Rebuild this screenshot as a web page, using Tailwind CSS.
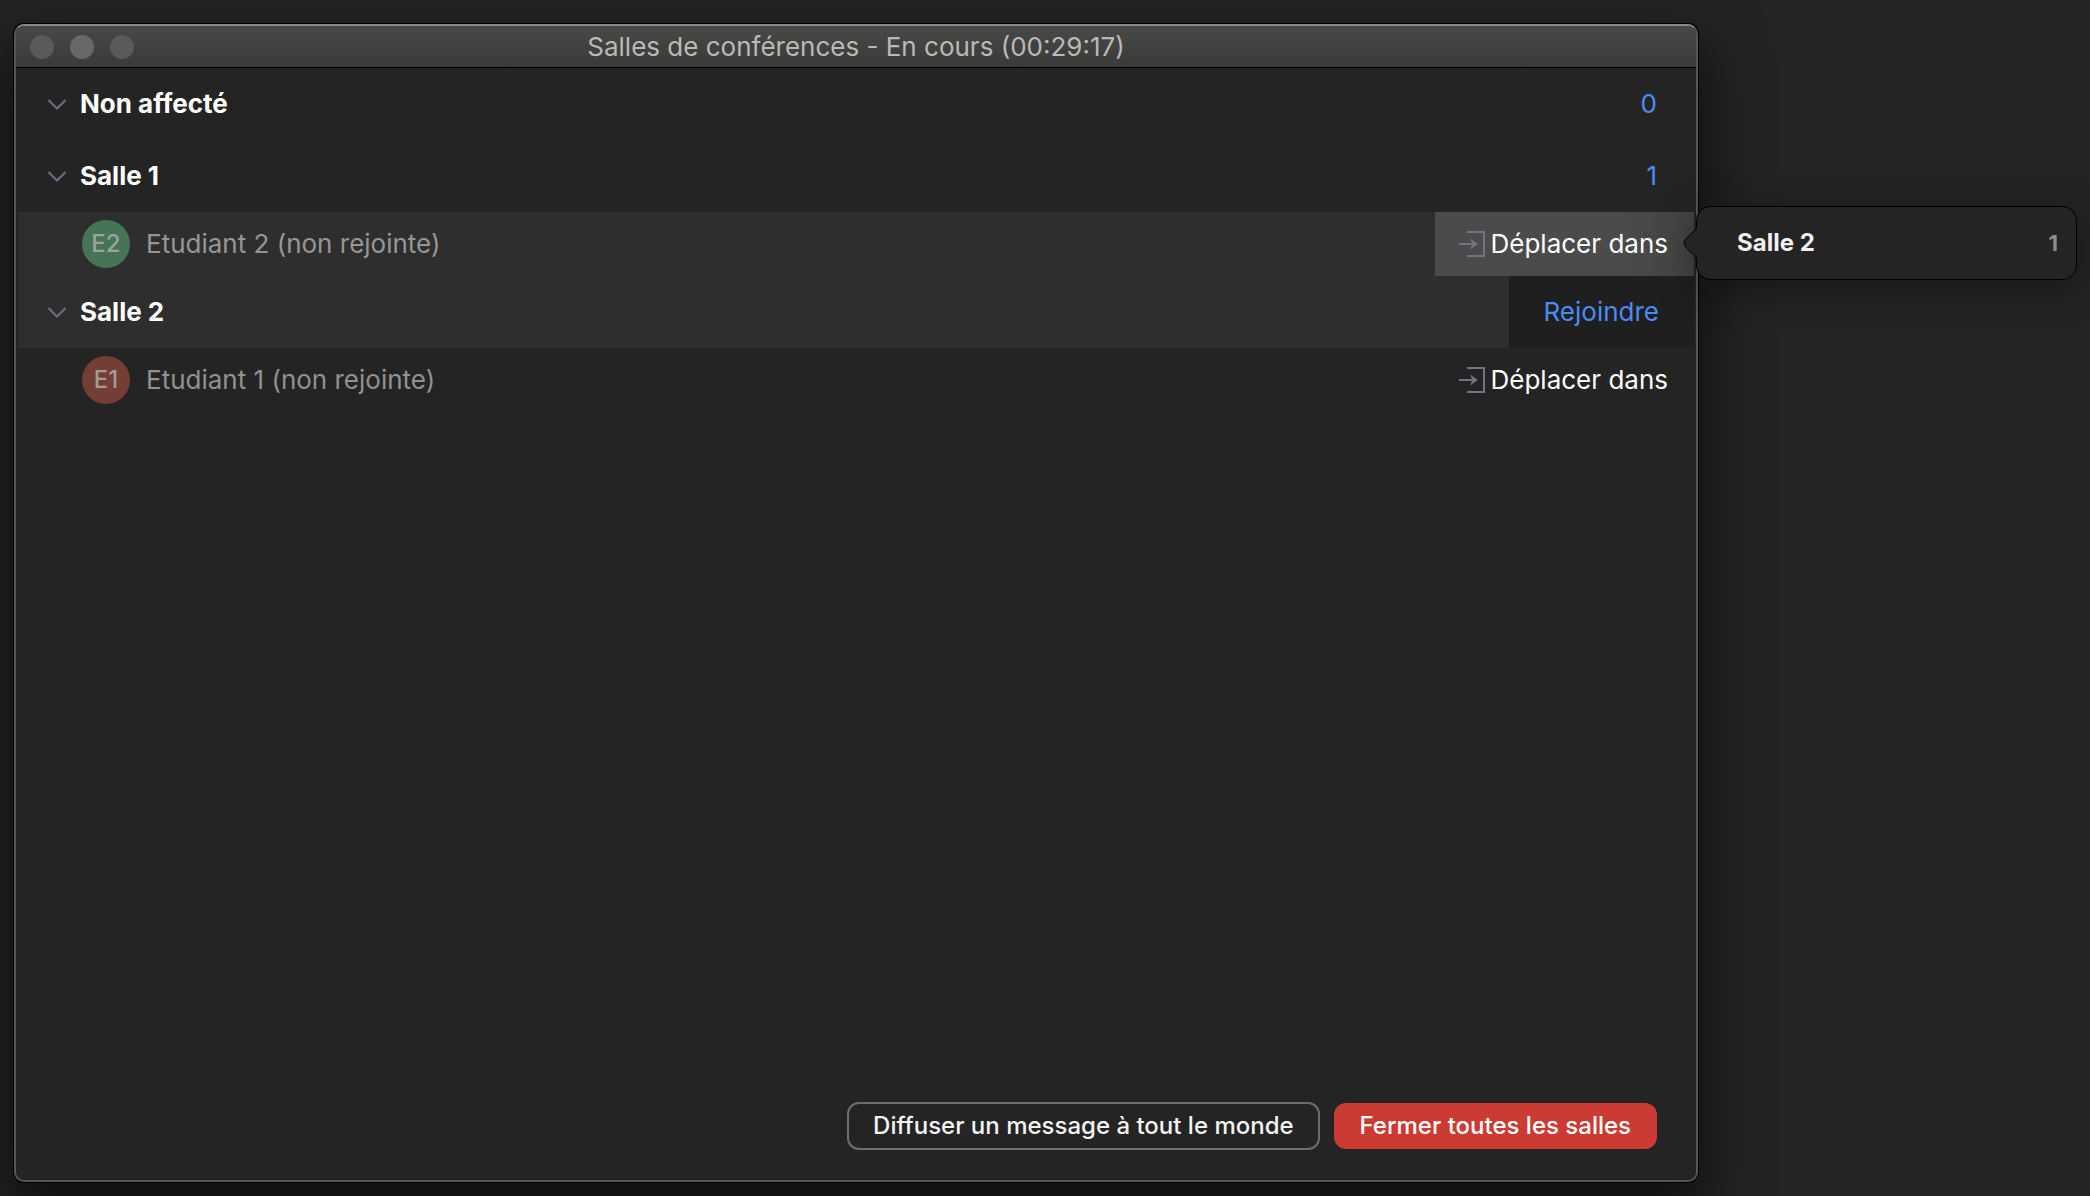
<!DOCTYPE html>
<html lang="fr">
<head>
    <meta charset="UTF-8">
    <meta name="viewport" content="width=device-width, initial-scale=1.0">
    <title>Salles de conférences</title>
    <script src="https://cdn.jsdelivr.net/npm/@tailwindcss/browser@4"></script>
</head>
<body class="bg-[#242424] font-['Inter','Liberation_Sans',sans-serif] text-[26px] leading-8 text-white">
    <div class="flex min-h-screen items-stretch overflow-hidden px-3.5 pt-6 pb-3.5">

        <!-- Breakout rooms window -->
        <main class="flex flex-1 flex-col overflow-hidden rounded-[10px] border-2 border-[#555555] border-t-[#8a8a88] bg-[#242424] shadow-[0_0_0_1px_#000,0_28px_60px_8px_rgba(0,0,0,0.6)]">
            <header class="relative flex h-[42px] items-center justify-center border-b border-black bg-linear-to-b from-[#484846] to-[#3a3a38]">
                <div class="absolute left-3.5 flex gap-4">
                    <button type="button" aria-label="Fermer" class="size-6 rounded-full bg-[#5a5a58]"></button>
                    <button type="button" aria-label="Réduire" class="size-6 rounded-full bg-[#686866]"></button>
                    <button type="button" aria-label="Agrandir" class="size-6 rounded-full bg-[#5a5a58]"></button>
                </div>
                <h1 class="text-[#b9b9b8]">Salles de conférences - En cours (00:29:17)</h1>
            </header>

            <div class="flex-1 px-0.5">
                <section>
                    <div class="flex h-18 items-center justify-between pr-[37px] pl-[30px]">
                        <button type="button" class="flex items-center gap-3.5 font-bold">
                            <svg class="h-[11px] w-[18px]" viewBox="0 0 18 11" fill="none" stroke="#6e6c80" stroke-width="2"><path d="M0.5 1 9 9.5 17.5 1"/></svg>
                            Non affecté
                        </button>
                        <span class="text-[#4a8cf7]">0</span>
                    </div>
                </section>

                <section>
                    <div class="flex h-18 items-center justify-between pr-[37px] pl-[30px]">
                        <button type="button" class="flex items-center gap-3.5 font-bold">
                            <svg class="h-[11px] w-[18px]" viewBox="0 0 18 11" fill="none" stroke="#6e6c80" stroke-width="2"><path d="M0.5 1 9 9.5 17.5 1"/></svg>
                            Salle 1
                        </button>
                        <span class="text-[#4a8cf7]">1</span>
                    </div>
                    <ul>
                        <li class="flex h-16 items-center justify-between bg-[#2e2e2e] pl-16">
                            <div class="flex items-center gap-4 text-[#969696]">
                                <span class="flex size-12 items-center justify-center rounded-full bg-[#467457] text-2xl font-medium text-[#9da39f]">E2</span>
                                <span>Etudiant 2 (non rejointe)</span>
                            </div>
                            <button type="button" class="flex h-16 items-center gap-1.5 bg-linear-to-r from-[#4b4b4b] from-70% to-[#434343] pr-[26px] pl-6">
                                <svg class="size-[26px]" viewBox="0 0 26 26" fill="none"><path d="M8 1h17v24H8" stroke="#74728a" stroke-width="2"/><path d="M0 13h15" stroke="#74728a" stroke-width="2"/><path d="M11 7.5 19 13l-8 5.500 2.500-5.500z" fill="#74728a"/></svg>
                                Déplacer dans
                            </button>
                        </li>
                    </ul>
                </section>

                <section>
                    <div class="flex h-18 items-center justify-between bg-[#2e2e2e] pl-[30px]">
                        <button type="button" class="flex items-center gap-3.5 font-bold">
                            <svg class="h-[11px] w-[18px]" viewBox="0 0 18 11" fill="none" stroke="#6e6c80" stroke-width="2"><path d="M0.5 1 9 9.5 17.5 1"/></svg>
                            Salle 2
                        </button>
                        <button type="button" class="h-18 bg-[#1f1f1f] px-[35px] text-[#4a8cf7]">Rejoindre</button>
                    </div>
                    <ul>
                        <li class="flex h-16 items-center justify-between pl-16">
                            <div class="flex items-center gap-4 text-[#919191]">
                                <span class="flex size-12 items-center justify-center rounded-full bg-[#733e33] text-2xl font-medium text-[#a59a97]">E1</span>
                                <span>Etudiant 1 (non rejointe)</span>
                            </div>
                            <button type="button" class="flex h-16 items-center gap-1.5 pr-[26px] pl-6">
                                <svg class="size-[26px]" viewBox="0 0 26 26" fill="none"><path d="M8 1h17v24H8" stroke="#74728a" stroke-width="2"/><path d="M0 13h15" stroke="#74728a" stroke-width="2"/><path d="M11 7.5 19 13l-8 5.500 2.500-5.500z" fill="#74728a"/></svg>
                                Déplacer dans
                            </button>
                        </li>
                    </ul>
                </section>
            </div>

            <footer class="flex items-center justify-end gap-3.5 pr-[39px] pb-[30px] text-2xl font-medium">
                <button type="button" class="h-12 rounded-xl border-2 border-[#6e6e6e] px-6 text-[#f4f4f4]">Diffuser un message à tout le monde</button>
                <button type="button" class="h-[46px] rounded-xl bg-[#cc3b33] px-[26px]">Fermer toutes les salles</button>
            </footer>
        </main>

        <!-- Move-to popover -->
        <aside class="relative mt-[183px] -ml-px flex h-[72px] w-[379px] items-center justify-between rounded-[14px] bg-[#242424] pr-[18px] pl-10 font-bold shadow-[0_0_0_1px_#000,0_8px_40px_rgba(0,0,0,0.4)]">
            <svg class="absolute top-5 -left-3.5 h-8 w-[15px]" viewBox="0 0 15 32"><path d="M15 0 3.500 11Q-1.500 16 3.500 21L15 32z" fill="#242424"/><path d="M14 1 3.500 11Q-1.500 16 3.500 21L14 31" fill="none" stroke="#000"/></svg>
            <button type="button" class="text-2xl text-[#f2f0f1]">Salle 2</button>
            <span class="text-[22px] text-[#8b8b8b]">1</span>
        </aside>
    </div>
</body>
</html>
